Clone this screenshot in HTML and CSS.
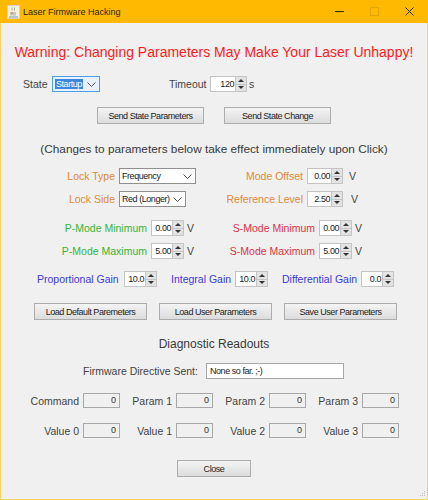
FILE: index.html
```html
<!DOCTYPE html>
<html lang="en">
<head>
<meta charset="utf-8">
<title>Laser Firmware Hacking</title>
<link rel="stylesheet" href="styles.css">
</head>
<body>
<div class="window">
  <header class="titlebar">
    <svg class="app-icon" width="13" height="14" viewBox="0 0 13 14"><rect x="0.5" y="0.5" width="12" height="13" fill="#f6f1e6" stroke="#d8cfc0"/><path d="M5 2.5v3M7.5 2.5v3" stroke="#a9a39a" fill="none"/><path d="M3 7h6v3.5H3z" fill="#c9c4bb"/><path d="M4 8h2" stroke="#e0803a"/><path d="M2 12h9" stroke="#7b93b8"/></svg>
    <span class="title">Laser Firmware Hacking</span>
    <div class="winbtns">
      <svg width="9" height="9" viewBox="0 0 9 9"><path d="M0 4.5h9" stroke="#3a2c00" stroke-width="1"/></svg>
      <svg width="9" height="9" viewBox="0 0 9 9"><rect x="0.5" y="0.5" width="8" height="8" fill="none" stroke="#e0a500"/></svg>
      <svg width="9" height="9" viewBox="0 0 9 9"><path d="M0.5 0.5l8 8M8.5 0.5l-8 8" stroke="#3a2c00" stroke-width="1"/></svg>
    </div>
  </header>
  <main class="content">
    <h1 class="warning">Warning: Changing Parameters May Make Your Laser Unhappy!</h1>

    <div class="row state-row">
      <span class="lbl state-lbl">State</span>
      <div class="select select-state"><span class="sel-text">Startup</span><svg class="chev" width="9" height="5" viewBox="0 0 9 5"><path d="M0.5 0.5l4 4 4-4" fill="none" stroke="#555"/></svg></div>
      <span class="lbl timeout-lbl">Timeout</span>
      <div class="spinner sp-37"><span class="val">120</span><div class="arrows"><i class="up"></i><i class="down"></i></div></div>
      <span class="lbl unit">s</span>
    </div>

    <div class="row btn-row btn-row-1">
      <button class="btn btn-state">Send State Parameters</button>
      <button class="btn btn-state">Send State Change</button>
    </div>

    <p class="note">(Changes to parameters below take effect immediately upon Click)</p>

    <div class="pair lock-1">
      <div class="cell"><span class="lbl orange w-lock">Lock Type</span><div class="select select-type">Frequency<svg class="chev" width="9" height="5" viewBox="0 0 9 5"><path d="M0.5 0.5l4 4 4-4" fill="none" stroke="#555"/></svg></div></div>
      <div class="cell"><span class="lbl orange w-level">Mode Offset</span><div class="spinner sp-36"><span class="val">0.00</span><div class="arrows"><i class="up"></i><i class="down"></i></div></div><span class="lbl unit-v">V</span></div>
    </div>
    <div class="pair lock-2">
      <div class="cell"><span class="lbl orange w-lock">Lock Side</span><div class="select select-side">Red (Longer)<svg class="chev" width="9" height="5" viewBox="0 0 9 5"><path d="M0.5 0.5l4 4 4-4" fill="none" stroke="#555"/></svg></div></div>
      <div class="cell"><span class="lbl orange w-level">Reference Level</span><div class="spinner sp-36"><span class="val">2.50</span><div class="arrows"><i class="up"></i><i class="down"></i></div></div><span class="lbl unit-v wide">V</span></div>
    </div>

    <div class="pair mode-1">
      <div class="cell"><span class="lbl green w-pmode">P-Mode Minimum</span><div class="spinner sp-33"><span class="val">0.00</span><div class="arrows"><i class="up"></i><i class="down"></i></div></div><span class="lbl unit-n">V</span></div>
      <div class="cell"><span class="lbl red w-smode">S-Mode Minimum</span><div class="spinner sp-33"><span class="val">0.00</span><div class="arrows"><i class="up"></i><i class="down"></i></div></div><span class="lbl unit-n">V</span></div>
    </div>
    <div class="pair mode-2">
      <div class="cell"><span class="lbl green w-pmode">P-Mode Maximum</span><div class="spinner sp-33"><span class="val">5.00</span><div class="arrows"><i class="up"></i><i class="down"></i></div></div><span class="lbl unit-n">V</span></div>
      <div class="cell"><span class="lbl red w-smode">S-Mode Maximum</span><div class="spinner sp-33"><span class="val">5.00</span><div class="arrows"><i class="up"></i><i class="down"></i></div></div><span class="lbl unit-n">V</span></div>
    </div>

    <div class="row gain-row">
      <span class="lbl blue w-prop">Proportional Gain</span>
      <div class="spinner sp-33"><span class="val">10.0</span><div class="arrows"><i class="up"></i><i class="down"></i></div></div>
      <span class="lbl blue gain-next w-int">Integral Gain</span>
      <div class="spinner sp-33"><span class="val">10.0</span><div class="arrows"><i class="up"></i><i class="down"></i></div></div>
      <span class="lbl blue gain-next w-diff">Differential Gain</span>
      <div class="spinner sp-33"><span class="val">0.0</span><div class="arrows"><i class="up"></i><i class="down"></i></div></div>
    </div>

    <div class="row btn-row btn-row-2">
      <button class="btn btn-load">Load Default Paremeters</button>
      <button class="btn btn-load">Load User Parameters</button>
      <button class="btn btn-load">Save User Parameters</button>
    </div>

    <h2 class="diag">Diagnostic Readouts</h2>

    <div class="row fw-row">
      <span class="lbl w-fw">Firmware Directive Sent:</span>
      <div class="fw-field">None so far. ;-)</div>
    </div>

    <div class="readouts rd-1">
      <span class="lbl">Command</span><div class="box">0</div>
      <span class="lbl">Param 1</span><div class="box">0</div>
      <span class="lbl">Param 2</span><div class="box">0</div>
      <span class="lbl">Param 3</span><div class="box">0</div>
    </div>
    <div class="readouts rd-2">
      <span class="lbl">Value 0</span><div class="box">0</div>
      <span class="lbl">Value 1</span><div class="box">0</div>
      <span class="lbl">Value 2</span><div class="box">0</div>
      <span class="lbl">Value 3</span><div class="box">0</div>
    </div>

    <div class="row close-row"><button class="btn btn-close">Close</button></div>
    <svg class="grip" width="8" height="8" viewBox="0 0 8 8"><path d="M6 1h1v1H6zM4 3h1v1H4zM6 3h1v1H6zM2 5h1v1H2zM4 5h1v1H4zM6 5h1v1H6z" fill="#bdbdbd"/></svg>
  </main>
</div>
</body>
</html>
```
FILE: styles.css
```css
* { box-sizing: border-box; }
html, body { margin: 0; padding: 0; }
body { width: 428px; height: 500px; overflow: hidden; background: #f0f0f0; font-family: "Liberation Sans", Arial, sans-serif; color: #333; }

.window { width: 428px; height: 500px; display: flex; flex-direction: column; }
.titlebar { height: 23px; background: #ffb900; display: flex; align-items: center; padding-left: 7px; flex: none; }
.app-icon { flex: none; }
.title { margin-left: 3px; font-family: "Liberation Sans", sans-serif; font-size: 9px; color: #2a1f00; }
.winbtns { margin-left: auto; display: flex; gap: 25px; padding-right: 14px; align-items: center; }
.winbtns svg:first-child { margin-right: 1px; }
.winbtns svg:nth-child(2) { margin-right: 1px; }

.content { flex: 1; position: relative; border-left: 1px solid #fdd160; border-right: 1px solid #fdd160; border-bottom: 1px solid #fdd160; background: #f0f0f0; }

.warning { margin: 19px 0 0; height: 20px; line-height: 20px; font-size: 14px; font-weight: 400; color: #ff1a1a; text-align: center; white-space: nowrap; }

.row { display: flex; align-items: center; }
.lbl { font-size: 10.5px; white-space: nowrap; color: #444; }
.orange { color: #e08a36; }
.green { color: #35b535; }
.red { color: #dd3344; }
.blue { color: #3a3ae0; }

.state-row { margin-top: 14px; height: 16px; padding-left: 22px; }
.state-lbl { width: 29px; }
.timeout-lbl { margin-left: 69px; width: 41px; }
.unit { margin-left: 2px; }

.select { height: 16px; background: #fff; border: 1px solid #8f8f8f; font-size: 9px; letter-spacing: -0.45px; color: #222; display: flex; align-items: center; padding-left: 2px; position: relative; white-space: nowrap; }
.chev { margin-left: auto; margin-right: 3px; flex: none; }
.select-state { width: 48px; border-color: #4d9de8; background: #e8f1fb; }
.sel-text { background: #3a86e0; color: #fff; padding: 0 1px; }
.select-type { width: 77px; }
.select-side { width: 67px; }

.spinner { height: 16px; display: flex; background: #fff; border: 1px solid #c4c4c4; flex: none; }
.val { flex: 1; text-align: right; font-size: 9px; letter-spacing: -0.45px; line-height: 14px; color: #222; padding-right: 1px; }
.arrows { width: 11px; display: flex; flex-direction: column; background: #e3e3e3; border-left: 1px solid #c4c4c4; }
.arrows i { flex: 1; display: flex; align-items: center; justify-content: center; }
.arrows i::before { content: ""; border-left: 3px solid transparent; border-right: 3px solid transparent; }
.up::before { border-bottom: 3px solid #333; }
.down { border-top: 1px solid #c4c4c4; }
.down::before { border-top: 3px solid #333; }
.sp-37 { width: 37px; }
.sp-36 { width: 36px; }
.sp-33 { width: 33px; }

.btn { font-family: "Liberation Sans", sans-serif; font-size: 9px; letter-spacing: -0.45px; color: #222; height: 17px; padding: 0; border: 1px solid #adadad; background: linear-gradient(#f4f4f4, #dcdcdc); white-space: nowrap; }
.btn-row { justify-content: flex-start; }
.btn-row-1 { margin-top: 15px; padding-left: 96px; gap: 20px; }
.btn-state { width: 107px; }
.btn-row-2 { margin-top: 16px; padding-left: 33px; gap: 12px; }
.btn-load { width: 113px; }

.note { margin: 17px 0 0; height: 16px; line-height: 16px; font-size: 11.8px; color: #3a3a3a; text-align: center; white-space: nowrap; }

.pair { display: grid; grid-template-columns: 214px 212px; height: 16px; }
.cell { display: flex; align-items: center; }
.cell .lbl:first-child { text-align: right; margin-right: 4px; flex: none; }
.lock-1 { margin-top: 11px; }
.lock-2 { margin-top: 7px; }
.mode-1 { margin-top: 13px; }
.mode-2 { margin-top: 7px; }
.w-lock { width: 114px; }
.w-level { width: 88px; }
.w-pmode { width: 146px; }
.w-smode { width: 100px; }
.unit-v { margin-left: 6px; }
.unit-v.wide { margin-left: 8px; }
.unit-n { margin-left: 3px; }

.gain-row { margin-top: 12px; height: 16px; padding-left: 36px; }
.gain-row .spinner { margin-left: 4px; }
.gain-next { margin-left: 14px; }
.w-prop { width: 83px; }
.w-int { width: 60px; }
.w-diff { width: 75px; }

.diag { margin: 16px 0 0; height: 16px; line-height: 16px; font-size: 12px; font-weight: 400; color: #3a3a3a; text-align: center; }

.fw-row { margin-top: 11px; height: 16px; padding-left: 82px; gap: 8px; }
.w-fw { width: 115px; }
.fw-field { width: 138px; height: 16px; border: 1px solid #a8a8a8; background: #fff; font-size: 9px; letter-spacing: -0.45px; line-height: 14px; padding-left: 3px; color: #222; }

.readouts { display: grid; grid-template-columns: 82px 37px 56px 37px 56px 37px 56px 37px; height: 15px; align-items: center; }
.readouts .lbl { text-align: right; padding-right: 4px; }
.rd-1 { margin-top: 14px; }
.rd-2 { margin-top: 15px; }
.box { height: 15px; border: 1px solid #a8a8a8; background: #f0f0f0; font-size: 9px; line-height: 13px; text-align: right; padding-right: 3px; color: #333; }

.close-row { margin-top: 22px; padding-left: 176px; }
.btn-close { width: 74px; }

.grip { position: absolute; right: 1px; bottom: 1px; }
```
